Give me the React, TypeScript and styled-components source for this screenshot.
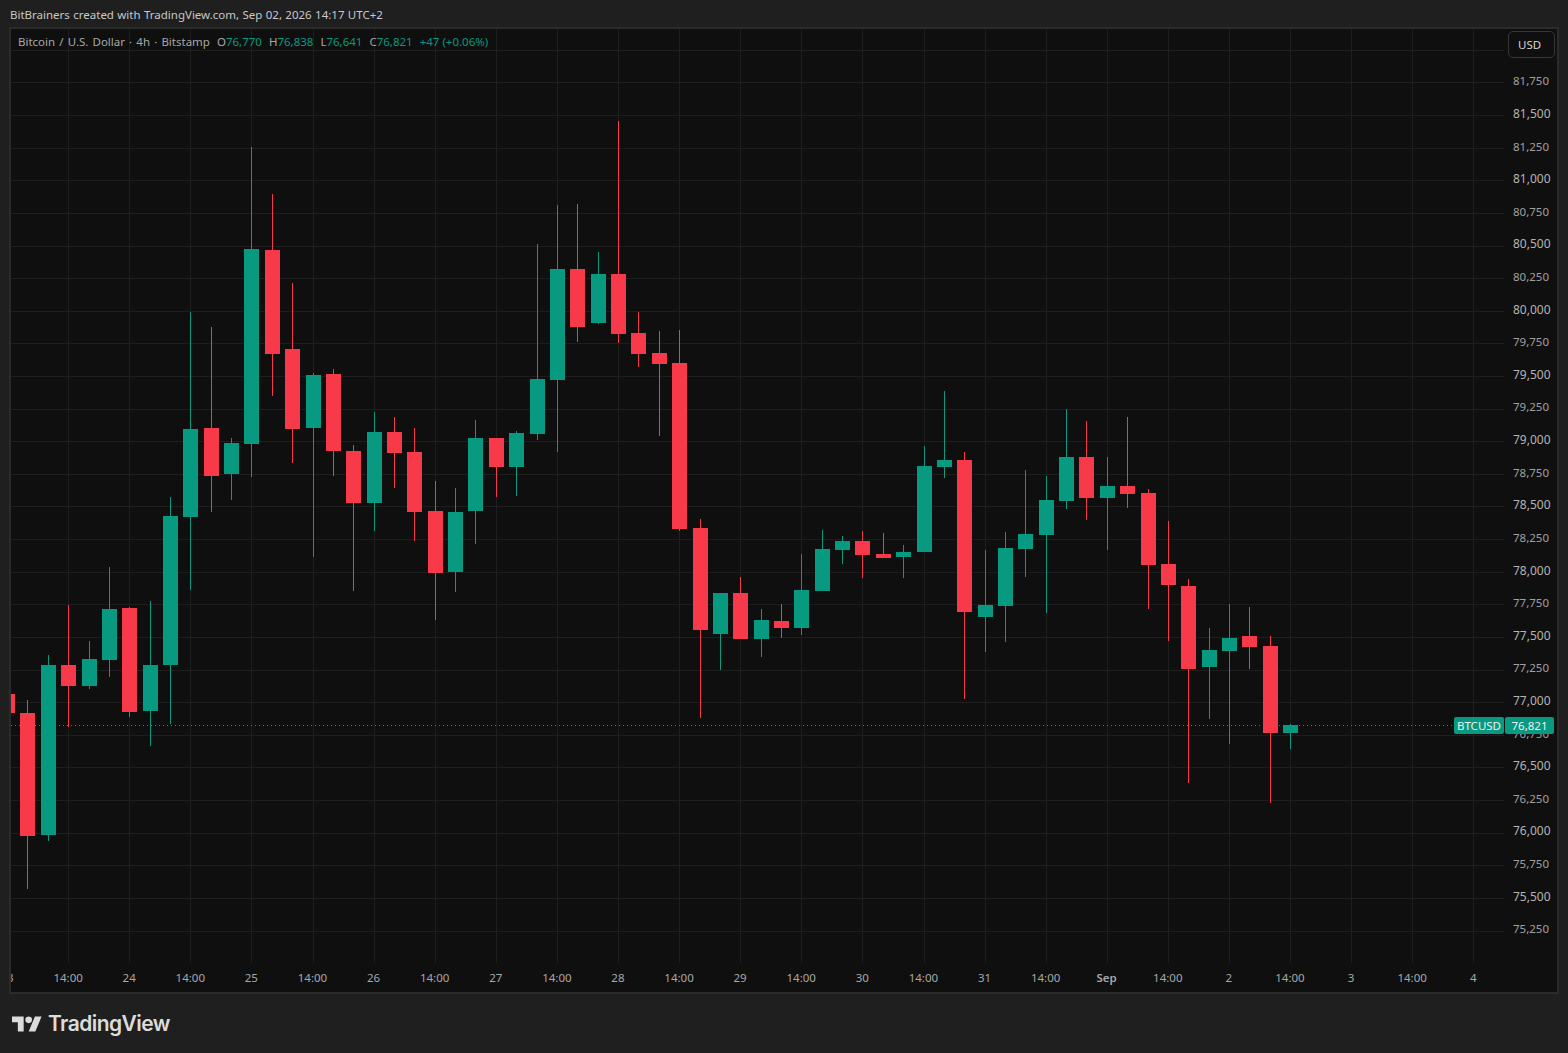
import styled, { createGlobalStyle } from "styled-components";

const GREEN = "#089981";
const RED = "#f7394a";

// wick top, wick bottom, body top, body bottom, in page pixels
type Candle = [number, number, number, number, "u" | "d"];

const candles: Candle[] = [
  [694, 713, 694, 713, "d"],
  [700, 889, 713, 836, "d"],
  [655, 841, 665, 835, "u"],
  [605, 727, 665, 686, "d"],
  [641, 689, 659, 686, "u"],
  [567, 677, 609, 660, "u"],
  [607, 717, 608, 712, "d"],
  [601, 746, 665, 711, "u"],
  [497, 724, 516, 665, "u"],
  [312, 590, 429, 517, "u"],
  [327, 512, 428, 476, "d"],
  [438, 500, 443, 474, "u"],
  [147, 477, 249, 444, "u"],
  [194, 396, 250, 354, "d"],
  [283, 463, 349, 429, "d"],
  [373, 557, 375, 428, "u"],
  [369, 476, 374, 451, "d"],
  [445, 591, 451, 503, "d"],
  [412, 531, 432, 503, "u"],
  [417, 488, 432, 453, "d"],
  [428, 541, 452, 512, "d"],
  [481, 620, 511, 573, "d"],
  [488, 592, 512, 572, "u"],
  [420, 544, 438, 511, "u"],
  [438, 497, 438, 467, "d"],
  [431, 496, 433, 467, "u"],
  [244, 440, 379, 434, "u"],
  [205, 452, 269, 380, "u"],
  [204, 342, 269, 327, "d"],
  [252, 324, 274, 323, "u"],
  [121, 343, 274, 334, "d"],
  [312, 367, 333, 354, "d"],
  [331, 436, 353, 364, "d"],
  [330, 531, 363, 529, "d"],
  [519, 718, 528, 630, "d"],
  [593, 670, 593, 634, "u"],
  [577, 639, 593, 639, "d"],
  [609, 657, 620, 639, "u"],
  [604, 638, 621, 628, "d"],
  [554, 635, 590, 628, "u"],
  [530, 591, 549, 591, "u"],
  [536, 564, 541, 550, "u"],
  [531, 578, 541, 555, "d"],
  [533, 558, 554, 558, "d"],
  [545, 578, 552, 557, "u"],
  [446, 552, 466, 552, "u"],
  [391, 478, 460, 467, "u"],
  [452, 699, 460, 612, "d"],
  [550, 652, 605, 617, "u"],
  [532, 642, 548, 606, "u"],
  [470, 577, 534, 549, "u"],
  [476, 613, 500, 535, "u"],
  [409, 509, 457, 501, "u"],
  [421, 520, 457, 498, "d"],
  [457, 550, 486, 498, "u"],
  [417, 508, 486, 494, "d"],
  [489, 609, 493, 565, "d"],
  [521, 641, 564, 585, "d"],
  [579, 783, 586, 669, "d"],
  [628, 719, 650, 667, "u"],
  [604, 744, 638, 651, "u"],
  [607, 669, 636, 647, "d"],
  [636, 803, 646, 733, "d"],
  [724, 749, 725, 733, "u"],
];

const prices = [
  "81,750", "81,500", "81,250", "81,000", "80,750", "80,500", "80,250", "80,000", "79,750",
  "79,500", "79,250", "79,000", "78,750", "78,500", "78,250", "78,000", "77,750", "77,500",
  "77,250", "77,000", "76,750", "76,500", "76,250", "76,000", "75,750", "75,500", "75,250",
];

const times = [
  "23", "14:00", "24", "14:00", "25", "14:00", "26", "14:00", "27", "14:00", "28", "14:00", "29",
  "14:00", "30", "14:00", "31", "14:00", "Sep", "14:00", "2", "14:00", "3", "14:00", "4",
];

const gridY = Array.from({ length: 28 }, (_, i) => Math.round(49.8 + i * 32.62));
const gridX = times.map((_, i) => Math.round(7.01 + i * 61.1));

const GlobalStyle = createGlobalStyle`
  html, body {
    margin: 0;
    padding: 0;
    background: #1f1f1f;
    font-family: "Noto Sans", "Liberation Sans", sans-serif;
  }
`;

const Page = styled.div`
  width: 1568px;
  height: 1053px;
  display: flex;
  flex-direction: column;
  background: #1f1f1f;
  overflow: hidden;
`;

const Caption = styled.div`
  height: 27px;
  padding: 2px 0 0 10px;
  box-sizing: border-box;
  font-size: 11.5px;
  line-height: 25px;
  word-spacing: 0.4px;
  color: #c8c8c8;
`;

const Frame = styled.div`
  position: relative;
  width: 1550px;
  height: 967px;
  margin-left: 9px;
  box-sizing: border-box;
  border: 2px solid #2b2b2b;
  background: #0f0f0f;
  display: grid;
  grid-template-columns: 1493px 1fr;
  grid-template-rows: 934px 1fr;
  overflow: hidden;
`;

const Plot = styled.svg`
  display: block;
  width: 1493px;
  height: 934px;
`;

const PriceAxis = styled.div`
  padding: 36.4px 0 0 9px;
`;

const PriceLabel = styled.div<{ $major: boolean }>`
  height: 32.62px;
  line-height: 32.62px;
  font-size: ${(p) => (p.$major ? "12px" : "11.5px")};
  color: ${(p) => (p.$major ? "#b4b4b4" : "#a0a0a0")};
  white-space: nowrap;
`;

const TimeAxis = styled.div`
  grid-column: 1 / 3;
  display: flex;
  margin-left: -34.55px;
`;

const TimeLabel = styled.div<{ $bold: boolean }>`
  flex: 0 0 61.1px;
  text-align: center;
  line-height: 30px;
  font-size: 11.5px;
  font-weight: ${(p) => (p.$bold ? 600 : 400)};
  color: #a8a8a8;
`;

const Legend = styled.div`
  position: absolute;
  left: 7px;
  top: 4px;
  display: flex;
  gap: 7px;
  font-size: 11.5px;
  line-height: 18px;
  color: #a8a8a8;
  white-space: nowrap;
`;

const LegendTitle = styled.span`
  word-spacing: 1.15px;
`;

const LegendValue = styled.span`
  color: ${GREEN};
`;

const UnitButton = styled.div`
  position: absolute;
  left: 1497px;
  top: 2px;
  width: 47px;
  height: 27px;
  box-sizing: border-box;
  padding-left: 9px;
  border: 1px solid #363636;
  border-radius: 5px;
  background: #0f0f0f;
  color: #d4d4d4;
  font-size: 11.5px;
  line-height: 25px;
`;

const PriceBadges = styled.div`
  position: absolute;
  left: 1443px;
  top: 688px;
  display: flex;
  gap: 1px;
`;

const Badge = styled.div<{ $width: number }>`
  width: ${(p) => p.$width}px;
  height: 17px;
  border-radius: 2px;
  background: ${GREEN};
  color: #f0f0f0;
  font-size: 11.5px;
  line-height: 17px;
  text-align: center;
`;

const Footer = styled.div`
  display: flex;
  align-items: center;
  gap: 6px;
  padding: 15px 0 0 12px;
  color: #dcdcdc;
`;

const Wordmark = styled.span`
  font-family: Inter, "Noto Sans", sans-serif;
  font-size: 21px;
  line-height: 30px;
  font-weight: 600;
  letter-spacing: -0.55px;
`;

const Logo = () => (
  <svg width="30" height="16" viewBox="0 4 36 18" fill="currentColor">
    <path d="M14 22H7V11H0V4h14v18zM28 22h-8l7.5-18h8L28 22z" />
    <circle cx="20" cy="8" r="4" />
  </svg>
);

const Chart = () => (
  <Plot viewBox="11 29 1493 934" shapeRendering="crispEdges">
    {gridY.map((y) => (
      <rect key={y} x={11} y={y} width={1493} height={1} fill="#1e1e1e" />
    ))}
    {gridX.map((x) => (
      <rect key={x} x={x} y={29} width={1} height={934} fill="#1e1e1e" />
    ))}
    <rect x={11} y={963} width={1493} height={1} fill="#222222" />
    <line x1={11} x2={1454} y1={725.5} y2={725.5} stroke={GREEN} strokeDasharray="1 3" />
    {candles.map(([wt, wb, bt, bb, dir], i) => {
      const left = Math.round(i * 20.365 + 0.1);
      const color = dir === "u" ? GREEN : RED;
      return (
        <g key={i} fill={color}>
          <rect x={left + 7} y={wt} width={1} height={wb - wt} />
          <rect x={left} y={bt} width={15} height={bb - bt} />
        </g>
      );
    })}
  </Plot>
);

export default function App() {
  return (
    <Page>
      <GlobalStyle />
      <Caption>BitBrainers created with TradingView.com, Sep 02, 2026 14:17 UTC+2</Caption>
      <Frame>
        <Chart />
        <PriceAxis>
          {prices.map((p) => (
            <PriceLabel key={p} $major={p.endsWith("000") || p.endsWith("500")}>
              {p}
            </PriceLabel>
          ))}
        </PriceAxis>
        <TimeAxis>
          {times.map((t, i) => (
            <TimeLabel key={i} $bold={t === "Sep"}>
              {t}
            </TimeLabel>
          ))}
        </TimeAxis>
        <Legend>
          <LegendTitle>Bitcoin / U.S. Dollar · 4h · Bitstamp</LegendTitle>
          <span>
            O<LegendValue>76,770</LegendValue>
          </span>
          <span>
            H<LegendValue>76,838</LegendValue>
          </span>
          <span>
            L<LegendValue>76,641</LegendValue>
          </span>
          <span>
            C<LegendValue>76,821</LegendValue>
          </span>
          <LegendValue>+47 (+0.06%)</LegendValue>
        </Legend>
        <UnitButton>USD</UnitButton>
        <PriceBadges>
          <Badge $width={50}>BTCUSD</Badge>
          <Badge $width={49}>76,821</Badge>
        </PriceBadges>
      </Frame>
      <Footer>
        <Logo />
        <Wordmark>TradingView</Wordmark>
      </Footer>
    </Page>
  );
}
